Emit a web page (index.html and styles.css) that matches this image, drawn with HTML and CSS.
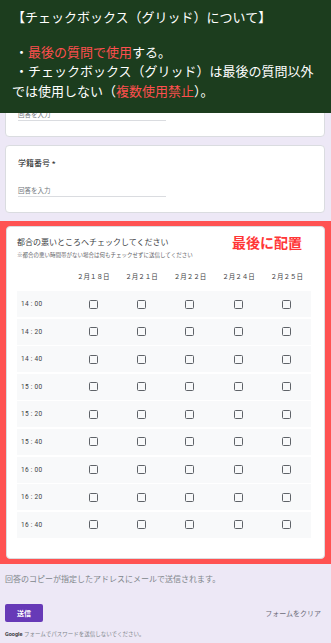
FILE: index.html
```html
<!DOCTYPE html>
<html lang="ja">
<head>
  <meta charset="UTF-8" />
  <title>フォーム</title>
  <link rel="stylesheet" href="styles.css">
</head>
<body>

  <div class="note">
    <div class="note-title">【チェックボックス（グリッド）について】</div>
    <p class="note-body">
      &nbsp;・<span class="red">最後の質問で使用</span>する。<br>
      &nbsp;・チェックボックス（グリッド）は最後の質問以外<br>では使用しない（<span class="red">複数使用禁止</span>）。
    </p>
  </div>

  <div class="form">
    <div class="card">
      <div class="label">&nbsp;</div>
      <div class="answer">回答を入力</div>
    </div>

    <div class="card">
      <div class="label">学籍番号 *</div>
      <div class="answer">回答を入力</div>
    </div>

    <div class="highlight">
      <div class="card grid-card">
        <div class="tag">最後に配置</div>
        <div class="q-title">都合の悪いところへチェックしてください</div>
        <div class="q-desc">※都合の悪い時間帯がない場合は何もチェックせずに送信してください</div>

        <div class="grid-head">
          <span></span>
          <span>２月１８日</span>
          <span>２月２１日</span>
          <span>２月２２日</span>
          <span>２月２４日</span>
          <span>２月２５日</span>
        </div>
        <div class="grid-rows" id="rows"></div>
      </div>
    </div>

    <div class="copy-note">回答のコピーが指定したアドレスにメールで送信されます。</div>

    <div class="actions">
      <button class="send">送信</button>
      <span class="clear">フォームをクリア</span>
    </div>

    <div class="footer"><b>Google</b> フォームでパスワードを送信しないでください。</div>
  </div>

  <script>
    const times = ["14 : 00", "14 : 20", "14 : 40", "15 : 00", "15 : 20", "15 : 40", "16 : 00", "16 : 20", "16 : 40"];
    const rows = document.getElementById("rows");

    times.forEach(t => {
      const row = document.createElement("div");
      row.className = "grid-row";
      let html = `<span class="time">${t}</span>`;
      for (let i = 0; i < 5; i++) {
        html += `<span class="cb-cell"><span class="cb"></span></span>`;
      }
      row.innerHTML = html;
      rows.appendChild(row);
    });
  </script>
</body>
</html>
```

FILE: styles.css
```css
body {
  margin: 0;
  padding: 69px 0 0;
  background: #ede8f6;
  font-family: Roboto, 'Noto Sans CJK JP', sans-serif;
  color: #202124;
}

/* annotation overlay */
.note {
  position: absolute;
  top: 0;
  left: 0;
  width: 331px;
  height: 113px;
  box-sizing: border-box;
  padding: 7px 0 0 12px;
  background: #1c3d1e;
  color: #fff;
  font-family: 'Noto Sans CJK JP', sans-serif;
  font-size: 13px;
  line-height: 19.5px;
  z-index: 2;
}

.note-title {
  margin-bottom: 15px;
}

.note-body {
  margin: 0;
}

.red {
  color: #ff4f4f;
}

.form {
  padding: 0 6px 0 5px;
}

.card {
  background: #fff;
  border-radius: 4px;
  border: 1px solid #dadce0;
  padding: 12px 12px 15px;
  margin-bottom: 8px;
}

.label {
  font-size: 8px;
  line-height: 12px;
  color: #202124;
}

.answer {
  margin-top: 16px;
  width: 148px;
  font-size: 6.5px;
  line-height: 10px;
  color: #70757a;
  border-bottom: 1px solid #dadce0;
}

/* red frame round the last question */
.highlight {
  margin: 5px -6px 0 -5px;
  padding: 5px 6px 5px 6px;
  background: #ff5252;
}

.grid-card {
  position: relative;
  margin: 0;
  padding: 10px 13px 20px 10px;
}

.tag {
  position: absolute;
  top: 5px;
  right: 22px;
  color: #ff3636;
  font-family: 'Noto Sans CJK JP', sans-serif;
  font-size: 14px;
  font-weight: bold;
  line-height: 20px;
}

.q-title {
  font-size: 8px;
  line-height: 12px;
  color: #3c4043;
}

.q-desc {
  margin-top: 2px;
  font-size: 5.5px;
  line-height: 8px;
  color: #5f6368;
}

.grid-head,
.grid-row {
  display: grid;
  grid-template-columns: 52px repeat(5, 1fr);
  align-items: center;
}

.grid-head {
  margin-top: 13px;
  margin-bottom: 9px;
  font-size: 6.5px;
  line-height: 10px;
  color: #3c4043;
  text-align: center;
}

.grid-rows {
  display: flex;
  flex-direction: column;
  gap: 1.6px;
}

.grid-row {
  height: 26px;
  background: #f8f9fa;
}

.time {
  padding-left: 4px;
  font-size: 6.5px;
  color: #3c4043;
  letter-spacing: 0.3px;
}

.cb-cell {
  display: flex;
  justify-content: center;
}

.cb {
  width: 9px;
  height: 9px;
  box-sizing: border-box;
  border: 1.5px solid #5f6368;
  border-radius: 1.5px;
}

.copy-note {
  margin-top: 10px;
  font-size: 8px;
  line-height: 12px;
  color: #80868b;
}

.actions {
  display: flex;
  justify-content: space-between;
  align-items: center;
  margin-top: 18px;
}

.send {
  width: 38px;
  height: 18px;
  padding: 0;
  border: none;
  border-radius: 2px;
  background: #673ab7;
  color: #fff;
  font-family: 'Noto Sans CJK JP', sans-serif;
  font-size: 7px;
  font-weight: bold;
}

.clear {
  margin-right: 4px;
  font-size: 7px;
  color: #6b6b78;
}

.footer {
  margin-top: 8px;
  font-size: 5.5px;
  line-height: 8px;
  color: #80868b;
}

.footer b {
  color: #3c4043;
}
```
